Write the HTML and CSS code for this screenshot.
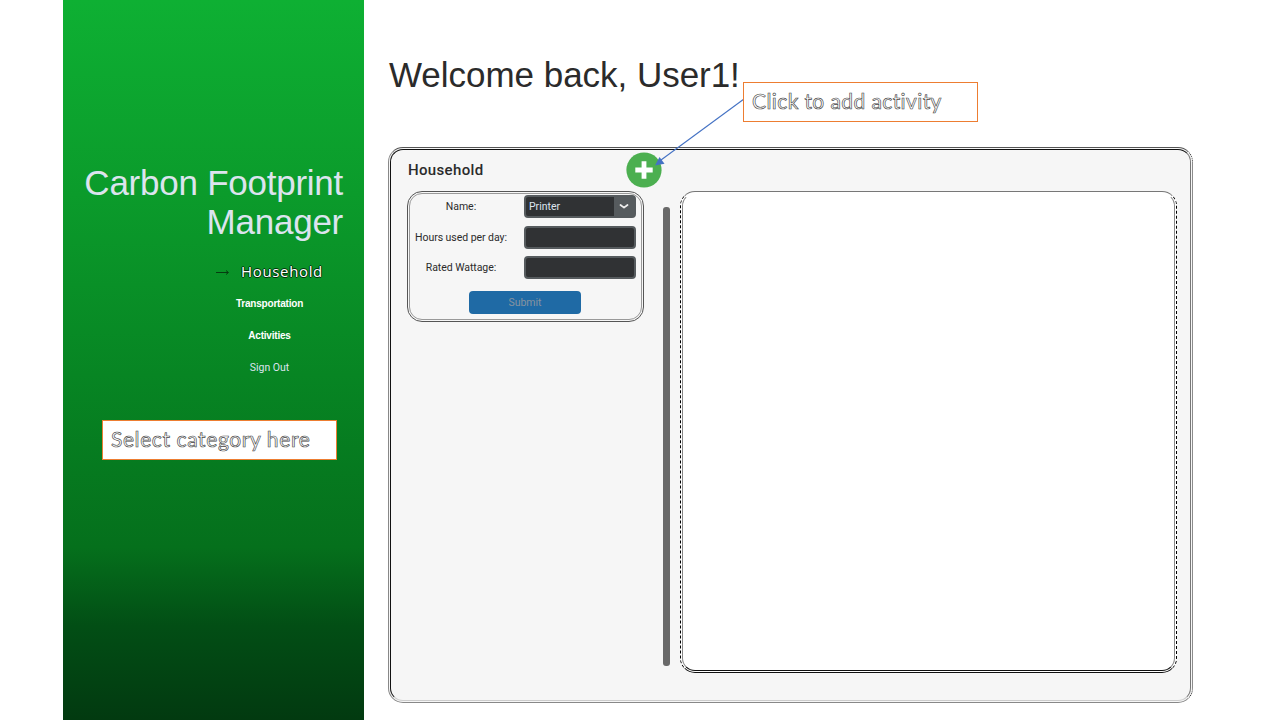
FILE: index.html
```html
<!DOCTYPE html>
<html lang="en">
<head>
<meta charset="utf-8">
<title>Carbon Footprint Manager</title>
<link rel="stylesheet" href="styles.css">
</head>
<body>
<div class="app">
  <aside class="sidebar">
    <h1 class="brand">Carbon Footprint<br>Manager</h1>
    <nav class="nav">
      <a class="nav-item active"><svg class="nav-arrow" width="14" height="8" viewBox="0 0 14 8"><path d="M0 4.5H12M10 2.5L12.5 4.5L10 6.5" fill="none" stroke="#063c10"/></svg><span class="outlined">Household</span></a>
      <a class="nav-item">Transportation</a>
      <a class="nav-item">Activities</a>
      <a class="nav-item sign-out">Sign Out</a>
    </nav>
    <div class="callout"><span class="callout-text">Select category here</span></div>
  </aside>
  <main class="main">
    <h2 class="welcome">Welcome back, User1!</h2>
    <section class="panel">
      <div class="left">
        <header class="panel-head">
          <h3 class="panel-title">Household</h3>
          <button class="add" aria-label="Add activity"><svg width="36" height="36" viewBox="0 0 36 36"><circle cx="18" cy="18" r="17.6" fill="#4caf50"/><path d="M18 9.3V26.7M9.3 18H26.7" stroke="#fff" stroke-width="4.8"/></svg></button>
        </header>
        <form class="card">
          <label class="label">Name:</label>
          <div class="field select"><span class="value">Printer</span><span class="chevron"><svg width="10" height="7" viewBox="0 0 10 7"><path d="M1.5 2L5 4.6L8.5 2" fill="none" stroke="#eee" stroke-width="1.8" stroke-linecap="round" stroke-linejoin="round"/></svg></span></div>
          <label class="label">Hours used per day:</label>
          <div class="field"></div>
          <label class="label">Rated Wattage:</label>
          <div class="field"></div>
          <button type="button" class="submit">Submit</button>
        </form>
      </div>
      <div class="scrollbar"></div>
      <div class="results"></div>
    </section>
  </main>
  <svg class="pointer" width="92" height="72" viewBox="0 0 92 72"><path d="M91 2L8 63" stroke="#4472c4" stroke-width="1.1"/><path d="M2 68.5L6.5 60L11.5 66.7Z" fill="#4472c4"/></svg>
  <div class="callout callout-add"><span class="callout-text">Click to add activity</span></div>
</div>
</body>
</html>
```
FILE: styles.css
```css
* { box-sizing: border-box; }
body { margin: 0; background: #fff; font-family: Roboto, sans-serif; color: #2b2b2b; }
h1, h2, h3 { margin: 0; font-weight: 400; }
button { border: 0; padding: 0; background: none; font-family: inherit; }
svg { display: block; }
.app { position: relative; display: flex; width: 1280px; height: 720px; padding-left: 63px; overflow: hidden; }

.sidebar {
  display: flex; flex-direction: column; align-items: flex-end;
  width: 301px; padding: 163px 21px 0 0;
  background: linear-gradient(#0eb033 0%, #0b9b2b 27%, #078523 52%, #05701c 76%, #024e15 87%, #023a10 100%);
}
.brand { font: 35px/39px "Liberation Sans", sans-serif; letter-spacing: -.25px; color: #dce4ee; text-align: right; white-space: nowrap; }
.nav { display: flex; flex-direction: column; align-items: center; width: 107px; margin: 14px 20px 0 0; }
.nav-item {
  display: flex; align-items: center; height: 32px;
  font: bold 10px/32px "Liberation Sans", sans-serif; letter-spacing: -.2px; color: #fff; white-space: nowrap;
}
.nav-item.active { height: 33px; gap: 11px; font: 15px/33px "Open Sans", sans-serif; }
.nav-item.sign-out { font: 10.5px/32px Roboto, sans-serif; letter-spacing: 0; color: #dce4ee; }
.outlined { color: #fff; letter-spacing: .65px; text-shadow: 1px 0 #003408, -1px 0 #003408, 0 1px #003408, 0 -1px #003408; }

.callout {
  display: flex; align-items: center; width: 235px; height: 40px; padding-left: 8px;
  border: 1px solid #ed7d31; background: #fff;
  font: 21px/38px Lato, sans-serif; white-space: nowrap;
}
.callout-text { position: relative; top: -1px; color: #fff; letter-spacing: .4px; -webkit-text-stroke: .65px #444; }
.sidebar .callout { margin: 36px 6px 0 0; }
.sidebar .callout-text { letter-spacing: .6px; }
.callout-add { position: absolute; left: 743px; top: 82px; }
.pointer { position: absolute; left: 653px; top: 97px; }

.main { flex: 1; padding: 54px 86px 0 24px; }
.welcome { height: 93px; padding-left: 1px; font: 35px/42px "Liberation Sans", sans-serif; letter-spacing: -.03px; white-space: nowrap; }
.panel {
  position: relative; display: flex; width: 805px; height: 556px; padding: 4px 15px 0 18px;
  border: 1px solid #888; border-radius: 15px; background: #f6f6f6;
  border-top-color: #555; border-right: 1px dotted #222;
}
.panel::before {
  content: ""; position: absolute; inset: 1px; border-radius: 13px; pointer-events: none;
  border: 1px solid #111; border-right-color: #777; border-bottom-color: #ccc;
}
.left { flex: none; width: 237px; }
.panel-head { display: flex; align-items: center; justify-content: space-between; height: 36px; margin-right: -18px; }
.panel-title { padding-left: 1px; font: 500 15px/36px Roboto, sans-serif; letter-spacing: .35px; }
.card {
  position: relative; display: grid; grid-template-columns: 106px 112px; column-gap: 10px;
  grid-template-rows: 23px 23px 23px 23px; row-gap: 7.5px;
  width: 237px; height: 131px; margin-top: 3px; padding: 3px 7px 0 0;
  border: 1px solid #555; border-radius: 15px;
}
.card::before {
  content: ""; position: absolute; inset: 1px; border-radius: 13px;
  border: 1px solid #999; pointer-events: none;
}
.label { font-size: 10.5px; line-height: 23px; text-align: center; white-space: nowrap; letter-spacing: -.05px; }
.field { height: 23px; border: 2px solid #565b5e; border-radius: 4px; background: #303234; }
.select { display: flex; justify-content: space-between; padding-left: 3px; }
.value { font-size: 10.5px; line-height: 20px; color: #dce4ee; }
.chevron { display: flex; align-items: center; justify-content: center; width: 20px; background: #565b5e; }
.submit {
  grid-column: 1 / -1; justify-self: center; width: 112px; height: 23px; margin: 4px 0 0 6px;
  border-radius: 4px; background: #1f6aa5; color: #8793a0; font-size: 10.5px; line-height: 23px;
}
.scrollbar { flex: none; width: 7px; height: 459px; margin: 55px 0 0 19px; border-radius: 3px; background: #696969; }
.results {
  flex: none; position: relative; width: 497px; height: 482px; margin: 39px 0 0 10px;
  border: 1px solid #777; border-left: 1px dashed #000; border-right: 1px dashed #000; border-bottom-color: #111;
  border-radius: 15px; background: #fff;
}
.results::before {
  content: ""; position: absolute; inset: 1px; border-radius: 13px;
  border: 1px solid #888; border-top-color: transparent; border-bottom-color: #111;
}
```
